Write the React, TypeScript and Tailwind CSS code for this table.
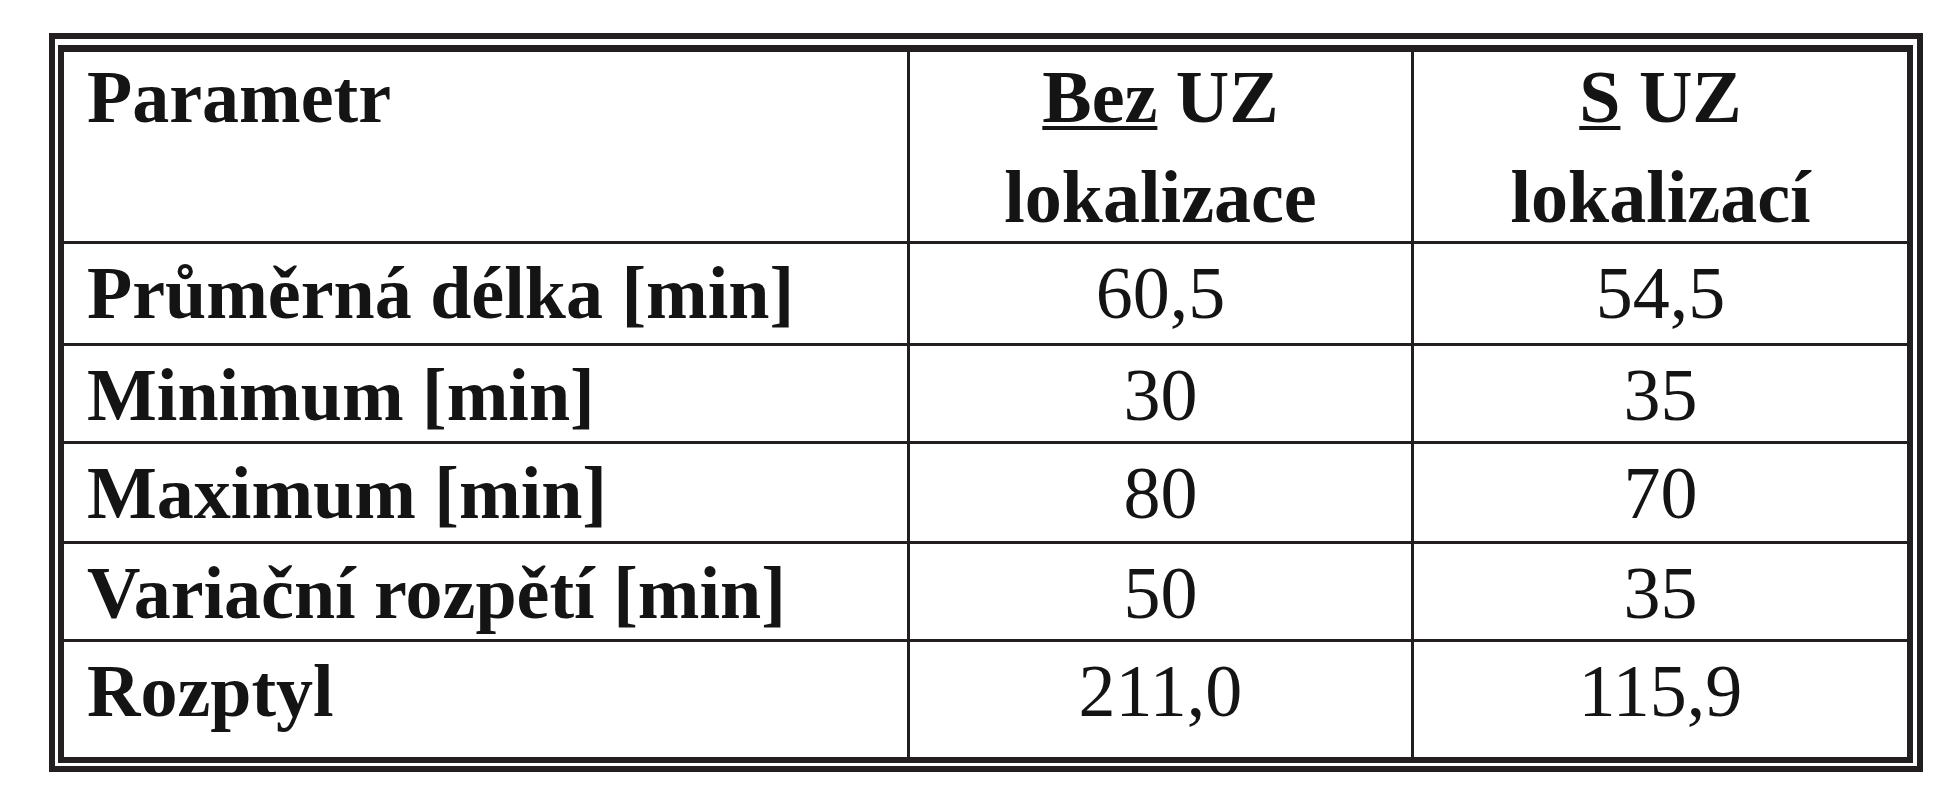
import React from "react";

const rows = [
  { label: "Průměrná délka [min]", bez: "60,5", s: "54,5" },
  { label: "Minimum [min]", bez: "30", s: "35" },
  { label: "Maximum [min]", bez: "80", s: "70" },
  { label: "Variační rozpětí [min]", bez: "50", s: "35" },
  { label: "Rozptyl", bez: "211,0", s: "115,9" },
];

const App = () => {
  return (
    <div
      className="min-h-screen bg-white pt-[33px] pl-[49px] text-[#141414]"
      style={{ fontFamily: '"Liberation Serif", "Times New Roman", serif' }}
    >
      {/* dvojity ramecek */}
      <div className="w-[1874px] border-[6px] border-[#231f20] pt-[6px] pl-[3px] pr-[4px] pb-[3px]">
        <div className="border-[6px] border-t-[7px] border-[#231f20]">
          <div className="grid grid-cols-[843px_504px_496px] grid-rows-[189px_102px_98px_100px_98px_118px] text-[74px] leading-[100px]">
            {/* hlavicka */}
            <div className="pl-[23px]">
              <div className="-mt-[5px] font-bold">Parametr</div>
            </div>
            <div className="border-l-[3px] border-[#231f20] text-center">
              <div className="-mt-[5px] font-bold">
                <div>
                  <span className="underline decoration-4 underline-offset-4">Bez</span> UZ
                </div>
                <div>lokalizace</div>
              </div>
            </div>
            <div className="border-l-[3px] border-[#231f20] text-center">
              <div className="-mt-[5px] font-bold">
                <div>
                  <span className="underline decoration-4 underline-offset-4">S</span> UZ
                </div>
                <div>lokalizací</div>
              </div>
            </div>

            {rows.map((r, i) => (
              <React.Fragment key={i}>
                <div className="border-t-[3px] border-[#231f20] pl-[23px] font-bold whitespace-nowrap">
                  <div className="-mt-[1px]">{r.label}</div>
                </div>
                <div className="border-t-[3px] border-l-[3px] border-[#231f20] text-center">
                  <div className="-mt-[1px]">{r.bez}</div>
                </div>
                <div className="border-t-[3px] border-l-[3px] border-[#231f20] text-center">
                  <div className="-mt-[1px]">{r.s}</div>
                </div>
              </React.Fragment>
            ))}
          </div>
        </div>
      </div>
    </div>
  );
};

export default App;
